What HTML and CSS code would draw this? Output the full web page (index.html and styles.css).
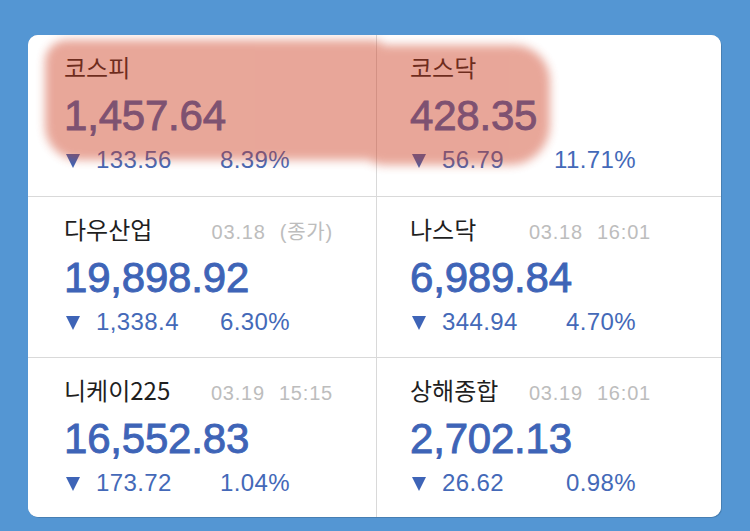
FILE: index.html
```html
<!DOCTYPE html>
<html lang="ko">
<head>
    <meta charset="UTF-8">
    <meta name="viewport" content="width=device-width, initial-scale=1.0">
    <title>주요 지수</title>
    <link rel="stylesheet" href="styles.css">
</head>
<body>
    <section class="index-board">
        <div class="index-grid">
            <div class="index-cell cell-left">
                <div class="cell-head">
                    <span class="index-name">코스피</span>
                </div>
                <div class="index-value">1,457.64</div>
                <div class="index-change">
                    <span class="change-amount"><svg class="down-mark" viewBox="0 0 14 14"><path d="M0 0H14L7 14Z"/></svg>133.56</span>
                    <span class="change-rate">8.39%</span>
                </div>
            </div>

            <div class="index-cell cell-right">
                <div class="cell-head">
                    <span class="index-name">코스닥</span>
                </div>
                <div class="index-value">428.35</div>
                <div class="index-change">
                    <span class="change-amount"><svg class="down-mark" viewBox="0 0 14 14"><path d="M0 0H14L7 14Z"/></svg>56.79</span>
                    <span class="change-rate">11.71%</span>
                </div>
            </div>

            <div class="index-cell cell-left">
                <div class="cell-head">
                    <span class="index-name">다우산업</span>
                    <span class="index-time">03.18<span class="time-gap">(종가)</span></span>
                </div>
                <div class="index-value">19,898.92</div>
                <div class="index-change">
                    <span class="change-amount"><svg class="down-mark" viewBox="0 0 14 14"><path d="M0 0H14L7 14Z"/></svg>1,338.4</span>
                    <span class="change-rate">6.30%</span>
                </div>
            </div>

            <div class="index-cell cell-right">
                <div class="cell-head">
                    <span class="index-name">나스닥</span>
                    <span class="index-time">03.18<span class="time-gap">16:01</span></span>
                </div>
                <div class="index-value">6,989.84</div>
                <div class="index-change">
                    <span class="change-amount"><svg class="down-mark" viewBox="0 0 14 14"><path d="M0 0H14L7 14Z"/></svg>344.94</span>
                    <span class="change-rate">4.70%</span>
                </div>
            </div>

            <div class="index-cell cell-left">
                <div class="cell-head">
                    <span class="index-name">니케이225</span>
                    <span class="index-time">03.19<span class="time-gap">15:15</span></span>
                </div>
                <div class="index-value">16,552.83</div>
                <div class="index-change">
                    <span class="change-amount"><svg class="down-mark" viewBox="0 0 14 14"><path d="M0 0H14L7 14Z"/></svg>173.72</span>
                    <span class="change-rate">1.04%</span>
                </div>
            </div>

            <div class="index-cell cell-right">
                <div class="cell-head">
                    <span class="index-name">상해종합</span>
                    <span class="index-time">03.19<span class="time-gap">16:01</span></span>
                </div>
                <div class="index-value">2,702.13</div>
                <div class="index-change">
                    <span class="change-amount"><svg class="down-mark" viewBox="0 0 14 14"><path d="M0 0H14L7 14Z"/></svg>26.62</span>
                    <span class="change-rate">0.98%</span>
                </div>
            </div>
        </div>

        <!-- 형광펜 표시 -->
        <div class="marker">
            <div class="marker-part marker-left"></div>
            <div class="marker-part marker-right"></div>
        </div>
    </section>
</body>
</html>
```

FILE: styles.css
```css
* {
    box-sizing: border-box;
    margin: 0;
    padding: 0;
}

body {
    background-color: #5496d3;
    padding: 35px 29px 14px 28px;
    font-family: 'Liberation Sans', Arial, sans-serif;
}

.index-board {
    position: relative;
    width: 693px;
    height: 482px;
    border-radius: 10px;
    overflow: hidden;
    box-shadow: 1px 1px 0 rgba(0,0,0,0.15);
}

.index-grid {
    display: grid;
    grid-template-columns: 348px 1fr;
    grid-template-rows: 161px 160px 1fr;
    gap: 1px;
    height: 100%;
    background: #d9d9d9;
}

.index-cell {
    background: #ffffff;
    padding-top: 16px;
}

.cell-left {
    padding-left: 36px;
}

.cell-right {
    padding-left: 33px;
}

.cell-head {
    display: flex;
    justify-content: space-between;
    align-items: baseline;
    height: 32px;
    line-height: 32px;
}

.cell-left .cell-head {
    width: 269px;
}

.cell-right .cell-head {
    width: 241px;
}

.index-name {
    font-family: 'Noto Sans CJK KR', sans-serif;
    font-size: 24px;
    color: #1f1f1f;
}

.index-time {
    font-family: 'Liberation Sans', 'Noto Sans CJK KR', sans-serif;
    font-size: 20px;
    letter-spacing: 0.8px;
    color: #bdbdbd;
}

.time-gap {
    margin-left: 14px;
}

.index-value {
    margin-top: 9px;
    font-size: 42px;
    line-height: 48px;
    color: #3e64b7;
    -webkit-text-stroke: 0.9px #3e64b7;
    letter-spacing: -0.2px;
}

.index-change {
    display: flex;
    justify-content: space-between;
    width: 226px;
    margin-top: 6px;
    font-size: 24px;
    line-height: 28px;
    letter-spacing: 0.4px;
    color: #4469b8;
}

.change-amount {
    display: flex;
    align-items: center;
}

.down-mark {
    flex-shrink: 0;
    width: 14px;
    height: 14px;
    margin: 2px 16px 0 2px;
    fill: #3e64b7;
}

.marker {
    position: absolute;
    inset: 0;
    opacity: 0.45;
    filter: blur(5px);
    pointer-events: none;
}

.marker-part {
    position: absolute;
    background: #cd3c1e;
}

.marker-left {
    left: 17px;
    top: 5px;
    width: 340px;
    height: 120px;
    border-radius: 22px 10px 10px 34px;
}

.marker-right {
    left: 330px;
    top: 10px;
    width: 192px;
    height: 120px;
    border-radius: 10px 36px 40px 26px;
}
```
